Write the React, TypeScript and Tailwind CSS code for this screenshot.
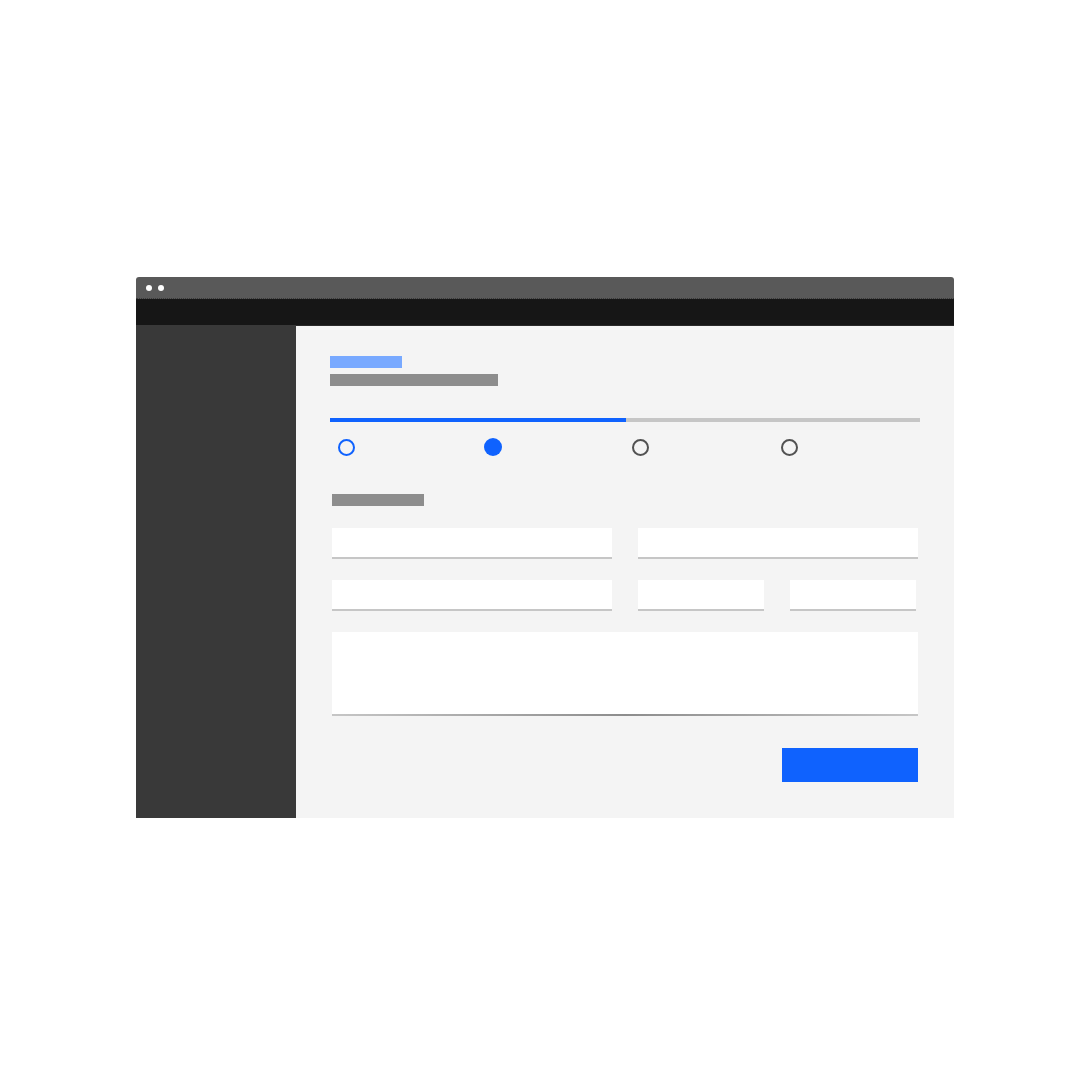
import React from "react";

export default function App() {
  return (
    <div className="w-[1088px] h-[1088px] bg-white relative font-['Liberation_Sans',sans-serif]">
      <div className="pt-[277px] pl-[136px]">
        <div className="w-[818px] h-[541px] flex flex-col overflow-hidden">
          {/* title bar */}
          <div className="h-[22px] bg-[#595959] rounded-t-[3px] flex items-center gap-[6px] pl-[10px] border-b border-dotted border-[#3a3a3a]">
            <div className="w-[6px] h-[6px] rounded-full bg-white" />
            <div className="w-[6px] h-[6px] rounded-full bg-white" />
          </div>
          {/* header band */}
          <div className="h-[26px] bg-[#161616]" />
          {/* body */}
          <div className="flex-1 flex">
            <div className="w-[160px] bg-[#393939]" />
            <div className="flex-1 bg-[#f4f4f4] border-t border-[#2a2a2a] pl-[34px] pr-[34px] pt-[30px] flex flex-col">
              <div className="w-[72px] h-[12px] bg-[#78a9ff]" />
              <div className="mt-[6px] w-[168px] h-[12px] bg-[#8d8d8d]" />
              {/* progress */}
              <div className="mt-[32px] h-[4px] flex">
                <div className="w-[296px] bg-[#0f62fe]" />
                <div className="flex-1 bg-[#c6c6c6]" />
              </div>
              <div className="mt-[16px] grid grid-cols-4">
                <div className="pl-[8px] h-[18px] flex items-center">
                  <div className="w-[17px] h-[17px] rounded-full border-2 border-[#0f62fe]" />
                </div>
                <div className="pl-[6px] h-[18px] flex items-center">
                  <div className="w-[18px] h-[18px] rounded-full bg-[#0f62fe]" />
                </div>
                <div className="pl-[7px] h-[18px] flex items-center">
                  <div className="w-[17px] h-[17px] rounded-full border-2 border-[#525252]" />
                </div>
                <div className="pl-[8px] h-[18px] flex items-center">
                  <div className="w-[17px] h-[17px] rounded-full border-2 border-[#525252]" />
                </div>
              </div>
              {/* section label */}
              <div className="mt-[38px] ml-[2px] w-[92px] h-[12px] bg-[#8d8d8d]" />
              {/* form */}
              <div className="mt-[22px] px-[2px] flex flex-col">
                <div className="flex gap-[26px]">
                  <div className="w-[280px] h-[31px] bg-white border-b-2 border-[#c6c6c6]" />
                  <div className="w-[280px] h-[31px] bg-white border-b-2 border-[#c6c6c6]" />
                </div>
                <div className="mt-[21px] flex gap-[26px]">
                  <div className="w-[280px] h-[31px] bg-white border-b-2 border-[#c6c6c6]" />
                  <div className="w-[126px] h-[31px] bg-white border-b-2 border-[#c6c6c6]" />
                  <div className="w-[126px] h-[31px] bg-white border-b-2 border-[#c6c6c6]" />
                </div>
                <div className="mt-[21px] w-[586px] flex flex-col">
                  <div className="h-[82px] bg-white" />
                  <div className="h-[2px] bg-gradient-to-r from-[#c6c6c6] via-[#8d8d8d] to-[#c6c6c6]" />
                </div>
                <div className="mt-[32px] w-[586px] flex justify-end">
                  <div className="w-[136px] h-[34px] bg-[#0f62fe]" />
                </div>
              </div>
            </div>
          </div>
        </div>
      </div>
    </div>
  );
}
